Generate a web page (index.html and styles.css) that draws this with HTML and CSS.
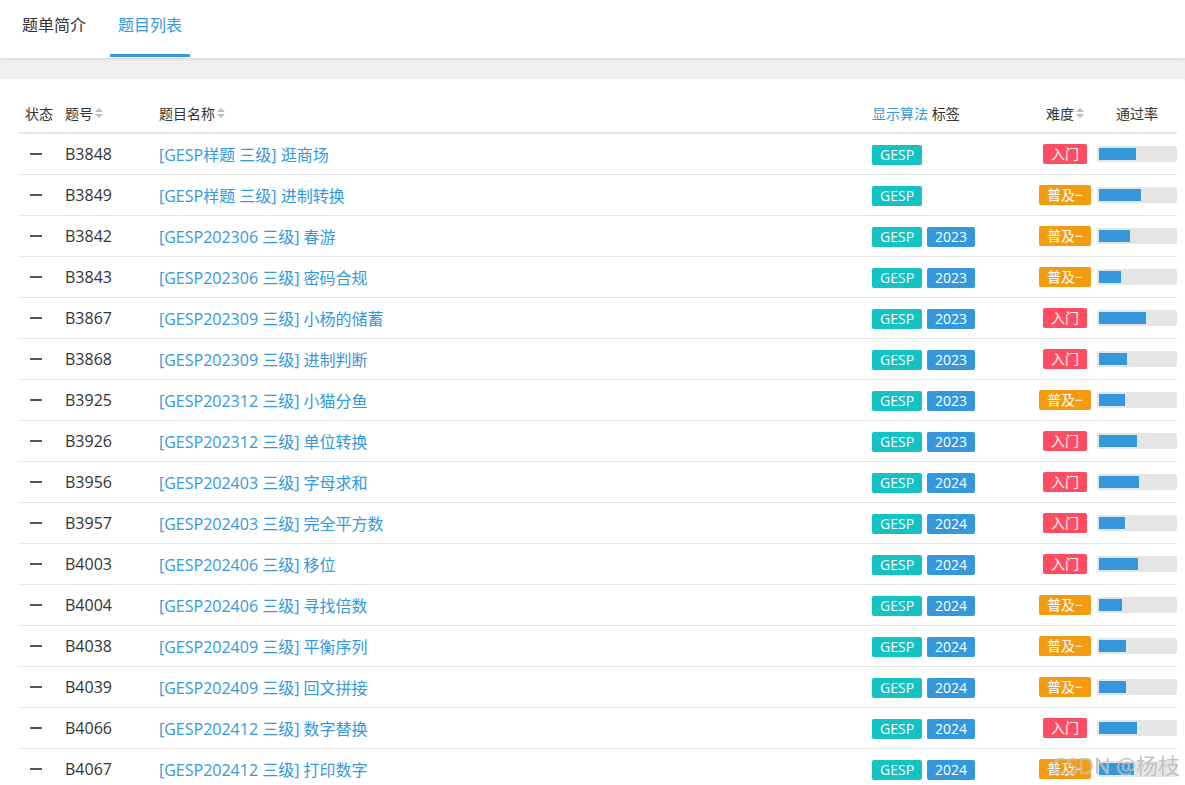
FILE: index.html
```html
<!DOCTYPE html>
<html lang="zh-CN">
<head>
<meta charset="utf-8">
<title>题目列表</title>
<link rel="stylesheet" href="styles.css">
</head>
<body>
<div class="tabbar">
  <div class="tab">题单简介</div>
  <div class="tab active">题目列表</div>
</div>
<div class="band"></div>
<div class="card">
  <div class="thead">
    <div class="c-status">状态</div>
    <div class="c-pid sortable">题号<svg class="sort" width="8" height="12" viewBox="0 0 8 12"><path d="M0 5 L4 1 L8 5 Z M0 7 L4 11 L8 7 Z" fill="#bbb"/></svg></div>
    <div class="c-title sortable">题目名称<svg class="sort" width="8" height="12" viewBox="0 0 8 12"><path d="M0 5 L4 1 L8 5 Z M0 7 L4 11 L8 7 Z" fill="#bbb"/></svg></div>
    <div class="c-tags"><span class="link">显示算法</span> 标签</div>
    <div class="c-diff sortable">难度<svg class="sort" width="8" height="12" viewBox="0 0 8 12"><path d="M0 5 L4 1 L8 5 Z M0 7 L4 11 L8 7 Z" fill="#bbb"/></svg></div>
    <div class="c-rate">通过率</div>
  </div>

  <div class="row"><div class="c-status"><span class="dash"></span></div><div class="c-pid">B3848</div><div class="c-title"><span class="link">[GESP样题 三级] 逛商场</span></div><div class="c-tags"><span class="tag src">GESP</span></div><div class="c-diff"><span class="diff red">入门</span></div><div class="c-rate"><div class="bar"><div class="fill" style="width:48.7%"></div></div></div></div>
  <div class="row"><div class="c-status"><span class="dash"></span></div><div class="c-pid">B3849</div><div class="c-title"><span class="link">[GESP样题 三级] 进制转换</span></div><div class="c-tags"><span class="tag src">GESP</span></div><div class="c-diff"><span class="diff orange">普及−</span></div><div class="c-rate"><div class="bar"><div class="fill" style="width:55.3%"></div></div></div></div>
  <div class="row"><div class="c-status"><span class="dash"></span></div><div class="c-pid">B3842</div><div class="c-title"><span class="link">[GESP202306 三级] 春游</span></div><div class="c-tags"><span class="tag src">GESP</span><span class="tag year">2023</span></div><div class="c-diff"><span class="diff orange">普及−</span></div><div class="c-rate"><div class="bar"><div class="fill" style="width:40.8%"></div></div></div></div>
  <div class="row"><div class="c-status"><span class="dash"></span></div><div class="c-pid">B3843</div><div class="c-title"><span class="link">[GESP202306 三级] 密码合规</span></div><div class="c-tags"><span class="tag src">GESP</span><span class="tag year">2023</span></div><div class="c-diff"><span class="diff orange">普及−</span></div><div class="c-rate"><div class="bar"><div class="fill" style="width:28.9%"></div></div></div></div>
  <div class="row"><div class="c-status"><span class="dash"></span></div><div class="c-pid">B3867</div><div class="c-title"><span class="link">[GESP202309 三级] 小杨的储蓄</span></div><div class="c-tags"><span class="tag src">GESP</span><span class="tag year">2023</span></div><div class="c-diff"><span class="diff red">入门</span></div><div class="c-rate"><div class="bar"><div class="fill" style="width:61.8%"></div></div></div></div>
  <div class="row"><div class="c-status"><span class="dash"></span></div><div class="c-pid">B3868</div><div class="c-title"><span class="link">[GESP202309 三级] 进制判断</span></div><div class="c-tags"><span class="tag src">GESP</span><span class="tag year">2023</span></div><div class="c-diff"><span class="diff red">入门</span></div><div class="c-rate"><div class="bar"><div class="fill" style="width:36.8%"></div></div></div></div>
  <div class="row"><div class="c-status"><span class="dash"></span></div><div class="c-pid">B3925</div><div class="c-title"><span class="link">[GESP202312 三级] 小猫分鱼</span></div><div class="c-tags"><span class="tag src">GESP</span><span class="tag year">2023</span></div><div class="c-diff"><span class="diff orange">普及−</span></div><div class="c-rate"><div class="bar"><div class="fill" style="width:34.2%"></div></div></div></div>
  <div class="row"><div class="c-status"><span class="dash"></span></div><div class="c-pid">B3926</div><div class="c-title"><span class="link">[GESP202312 三级] 单位转换</span></div><div class="c-tags"><span class="tag src">GESP</span><span class="tag year">2023</span></div><div class="c-diff"><span class="diff red">入门</span></div><div class="c-rate"><div class="bar"><div class="fill" style="width:50%"></div></div></div></div>
  <div class="row"><div class="c-status"><span class="dash"></span></div><div class="c-pid">B3956</div><div class="c-title"><span class="link">[GESP202403 三级] 字母求和</span></div><div class="c-tags"><span class="tag src">GESP</span><span class="tag year">2024</span></div><div class="c-diff"><span class="diff red">入门</span></div><div class="c-rate"><div class="bar"><div class="fill" style="width:52.6%"></div></div></div></div>
  <div class="row"><div class="c-status"><span class="dash"></span></div><div class="c-pid">B3957</div><div class="c-title"><span class="link">[GESP202403 三级] 完全平方数</span></div><div class="c-tags"><span class="tag src">GESP</span><span class="tag year">2024</span></div><div class="c-diff"><span class="diff red">入门</span></div><div class="c-rate"><div class="bar"><div class="fill" style="width:34.2%"></div></div></div></div>
  <div class="row"><div class="c-status"><span class="dash"></span></div><div class="c-pid">B4003</div><div class="c-title"><span class="link">[GESP202406 三级] 移位</span></div><div class="c-tags"><span class="tag src">GESP</span><span class="tag year">2024</span></div><div class="c-diff"><span class="diff red">入门</span></div><div class="c-rate"><div class="bar"><div class="fill" style="width:51.3%"></div></div></div></div>
  <div class="row"><div class="c-status"><span class="dash"></span></div><div class="c-pid">B4004</div><div class="c-title"><span class="link">[GESP202406 三级] 寻找倍数</span></div><div class="c-tags"><span class="tag src">GESP</span><span class="tag year">2024</span></div><div class="c-diff"><span class="diff orange">普及−</span></div><div class="c-rate"><div class="bar"><div class="fill" style="width:30.3%"></div></div></div></div>
  <div class="row"><div class="c-status"><span class="dash"></span></div><div class="c-pid">B4038</div><div class="c-title"><span class="link">[GESP202409 三级] 平衡序列</span></div><div class="c-tags"><span class="tag src">GESP</span><span class="tag year">2024</span></div><div class="c-diff"><span class="diff orange">普及−</span></div><div class="c-rate"><div class="bar"><div class="fill" style="width:35.5%"></div></div></div></div>
  <div class="row"><div class="c-status"><span class="dash"></span></div><div class="c-pid">B4039</div><div class="c-title"><span class="link">[GESP202409 三级] 回文拼接</span></div><div class="c-tags"><span class="tag src">GESP</span><span class="tag year">2024</span></div><div class="c-diff"><span class="diff orange">普及−</span></div><div class="c-rate"><div class="bar"><div class="fill" style="width:35.5%"></div></div></div></div>
  <div class="row"><div class="c-status"><span class="dash"></span></div><div class="c-pid">B4066</div><div class="c-title"><span class="link">[GESP202412 三级] 数字替换</span></div><div class="c-tags"><span class="tag src">GESP</span><span class="tag year">2024</span></div><div class="c-diff"><span class="diff red">入门</span></div><div class="c-rate"><div class="bar"><div class="fill" style="width:50%"></div></div></div></div>
  <div class="row"><div class="c-status"><span class="dash"></span></div><div class="c-pid">B4067</div><div class="c-title"><span class="link">[GESP202412 三级] 打印数字</span></div><div class="c-tags"><span class="tag src">GESP</span><span class="tag year">2024</span></div><div class="c-diff"><span class="diff orange">普及−</span></div><div class="c-rate"><div class="bar"><div class="fill" style="width:46%"></div></div></div></div>
</div>
<div class="watermark">CSDN @杨枝</div>
</body>
</html>
```
FILE: styles.css
```css
html, body {
  margin: 0;
  padding: 0;
}
body {
  font-family: "Open Sans", "Noto Sans CJK SC", sans-serif;
  background: #efefef;
  color: #333;
  overflow: hidden;
}
.tabbar {
  position: relative;
  z-index: 1;
  height: 58px;
  box-sizing: border-box;
  background: #fff;
  box-shadow: 0 1px 3px rgba(0, 0, 0, 0.12);
  display: flex;
  gap: 16px;
  padding-left: 14px;
}
.tab {
  box-sizing: border-box;
  height: 57px;
  padding: 14px 8px 0;
  font-size: 16px;
  line-height: 22px;
  color: #333;
  border-bottom: 3px solid transparent;
}
.tab.active {
  color: #3498db;
  border-bottom-color: #3498db;
}
.band {
  height: 21px;
}
.card {
  background: #fff;
  border-radius: 3px 3px 0 0;
  padding: 14px 8px 0 18px;
}
.thead,
.row {
  display: grid;
  grid-template-columns: 47px 94px 713px 163px 60px 82px;
  align-items: center;
}
.thead {
  height: 39px;
  border-bottom: 2px solid #e5e5e5;
  font-size: 14px;
  color: #333;
}
.row {
  height: 40px;
  border-bottom: 1px solid #e8e8e8;
  font-size: 16px;
}
.c-status {
  padding-left: 7px;
}
.row .c-status {
  padding-left: 12px;
}
.sortable {
  display: flex;
  align-items: center;
  gap: 2px;
}
.sort {
  display: block;
}
.c-diff {
  display: flex;
  justify-content: center;
}
.c-rate {
  display: flex;
  justify-content: flex-end;
}
.thead .c-rate {
  justify-content: center;
  padding-left: 2px;
}
.link {
  color: #3498db;
}
.dash {
  display: block;
  width: 12px;
  height: 2px;
  background: #555;
}
.tag {
  display: inline-block;
  height: 20px;
  line-height: 20px;
  padding: 0 8px;
  margin-right: 5px;
  border-radius: 2px;
  color: #fff;
  font-size: 14px;
  font-weight: 500;
  vertical-align: middle;
}
.tag.src {
  background: #13c2c2;
}
.tag.year {
  background: #3498db;
}
.diff {
  display: inline-block;
  height: 20px;
  line-height: 20px;
  padding: 0 8px;
  border-radius: 2px;
  color: #fff;
  font-size: 14px;
}
.diff.red {
  background: #fe4c61;
}
.diff.orange {
  background: #f39c11;
}
.bar {
  width: 80px;
  height: 16px;
  box-sizing: border-box;
  padding: 2px;
  background: #e5e5e5;
  border-radius: 2px;
}
.fill {
  height: 12px;
  background: #3498db;
}
.watermark {
  position: fixed;
  right: 5px;
  bottom: 5px;
  font-size: 22px;
  color: rgba(160, 160, 160, 0.65);
  text-shadow: 0 0 1px rgba(255, 255, 255, 0.8);
  pointer-events: none;
}
```
